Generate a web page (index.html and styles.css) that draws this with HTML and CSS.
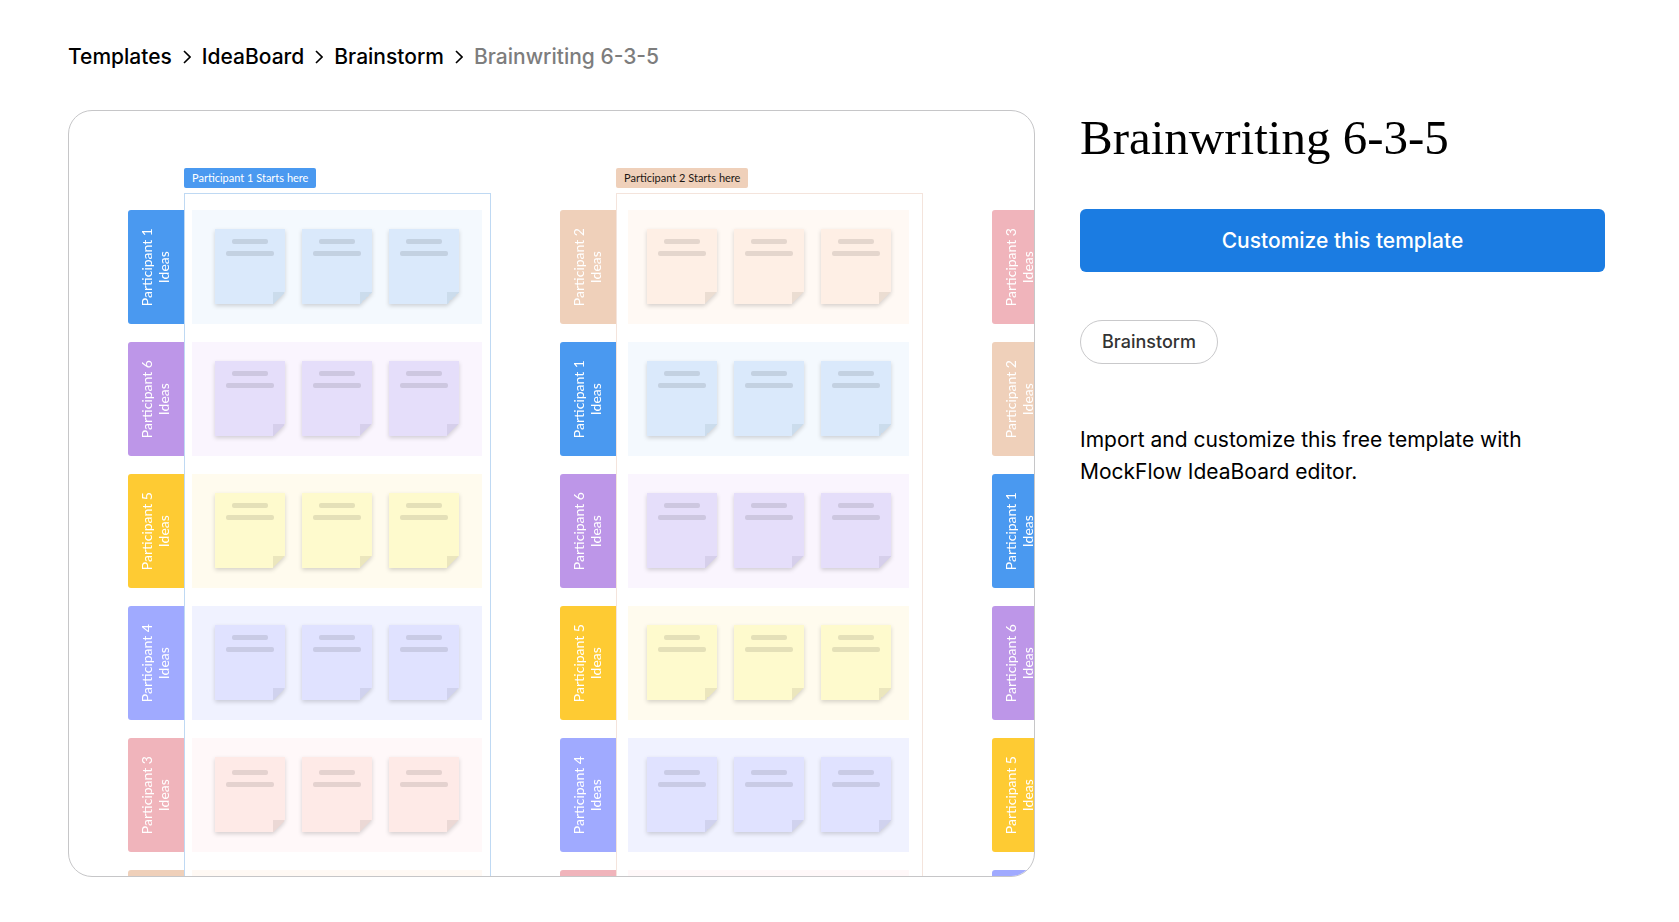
FILE: index.html
```html
<!DOCTYPE html>
<html lang="en">
<head>
  <meta charset="UTF-8">
  <meta name="viewport" content="width=device-width, initial-scale=1.0">
  <title>Brainwriting 6-3-5</title>
  <link rel="stylesheet" href="styles.css">
</head>
<body>

<div class="page">

  <!-- Breadcrumb -->
  <nav class="breadcrumb" aria-label="Breadcrumb">
    <a href="#">Templates</a>
    <svg class="chevron" viewBox="0 0 8 14"><path d="M1 1l6 6-6 6"/></svg>
    <a href="#">IdeaBoard</a>
    <svg class="chevron" viewBox="0 0 8 14"><path d="M1 1l6 6-6 6"/></svg>
    <a href="#">Brainstorm</a>
    <svg class="chevron" viewBox="0 0 8 14"><path d="M1 1l6 6-6 6"/></svg>
    <span class="current">Brainwriting 6-3-5</span>
  </nav>

  <main class="content">

    <!-- Template Preview -->
    <section class="preview">
      <div class="board">

        <div class="lane">
          <div class="tabs">
            <div class="tab blue"><span>Participant 1<br>Ideas</span></div>
            <div class="tab purple"><span>Participant 6<br>Ideas</span></div>
            <div class="tab yellow"><span>Participant 5<br>Ideas</span></div>
            <div class="tab indigo"><span>Participant 4<br>Ideas</span></div>
            <div class="tab pink"><span>Participant 3<br>Ideas</span></div>
            <div class="tab peach"></div>
          </div>
          <div class="panel">
            <div class="start blue">Participant 1 Starts here</div>
            <div class="frame frame-blue">
              <div class="strip blue"><i class="note"></i><i class="note"></i><i class="note"></i></div>
              <div class="strip purple"><i class="note"></i><i class="note"></i><i class="note"></i></div>
              <div class="strip yellow"><i class="note"></i><i class="note"></i><i class="note"></i></div>
              <div class="strip indigo"><i class="note"></i><i class="note"></i><i class="note"></i></div>
              <div class="strip pink"><i class="note"></i><i class="note"></i><i class="note"></i></div>
              <div class="strip peach"></div>
            </div>
          </div>
        </div>

        <div class="lane">
          <div class="tabs">
            <div class="tab peach"><span>Participant 2<br>Ideas</span></div>
            <div class="tab blue"><span>Participant 1<br>Ideas</span></div>
            <div class="tab purple"><span>Participant 6<br>Ideas</span></div>
            <div class="tab yellow"><span>Participant 5<br>Ideas</span></div>
            <div class="tab indigo"><span>Participant 4<br>Ideas</span></div>
            <div class="tab pink"></div>
          </div>
          <div class="panel">
            <div class="start start-dark peach">Participant 2 Starts here</div>
            <div class="frame frame-peach">
              <div class="strip peach"><i class="note"></i><i class="note"></i><i class="note"></i></div>
              <div class="strip blue"><i class="note"></i><i class="note"></i><i class="note"></i></div>
              <div class="strip purple"><i class="note"></i><i class="note"></i><i class="note"></i></div>
              <div class="strip yellow"><i class="note"></i><i class="note"></i><i class="note"></i></div>
              <div class="strip indigo"><i class="note"></i><i class="note"></i><i class="note"></i></div>
              <div class="strip pink"></div>
            </div>
          </div>
        </div>

        <div class="lane">
          <div class="tabs">
            <div class="tab pink"><span>Participant 3<br>Ideas</span></div>
            <div class="tab peach"><span>Participant 2<br>Ideas</span></div>
            <div class="tab blue"><span>Participant 1<br>Ideas</span></div>
            <div class="tab purple"><span>Participant 6<br>Ideas</span></div>
            <div class="tab yellow"><span>Participant 5<br>Ideas</span></div>
            <div class="tab indigo"></div>
          </div>
        </div>

      </div>
    </section>

    <!-- Template Details -->
    <section class="details">
      <h1>Brainwriting 6-3-5</h1>
      <button type="button" class="button">Customize this template</button>
      <a href="#" class="tag">Brainstorm</a>
      <p class="description">Import and customize this free template with MockFlow IdeaBoard editor.</p>
    </section>

  </main>
</div>

</body>
</html>
```

FILE: styles.css
```css
/* Global Styling */
* {
  box-sizing: border-box;
  margin: 0;
  padding: 0;
}
body {
  font-family: Inter, "Liberation Sans", sans-serif;
  background-color: #fff;
  color: #000;
}
a {
  color: inherit;
  text-decoration: none;
}
.page {
  padding: 41px 74px 45px 68px;
}

/* Breadcrumb */
.breadcrumb {
  display: flex;
  align-items: center;
  gap: 11px;
  font-size: 21px;
  font-weight: 500;
  line-height: 32px;
}
.breadcrumb .current {
  color: #7d7d7d;
}
.chevron {
  width: 8px;
  height: 14px;
  fill: none;
  stroke: #000;
  stroke-width: 1.6;
}

/* Page Columns */
.content {
  display: grid;
  grid-template-columns: 967fr 525fr;
  gap: 45px;
  align-items: start;
  margin-top: 37px;
}

/* Template Preview */
.preview {
  aspect-ratio: 967 / 767;
  min-width: 0;
  border: 1px solid #c6c6c8;
  border-radius: 24px;
  overflow: hidden;
}
.board {
  display: flex;
  gap: 69px;
  height: 100%;
  padding: 57px 0 0 59px;
  font-family: Lato, sans-serif;
  overflow: hidden;
}
.lane {
  display: flex;
  flex: none;
  align-items: flex-start;
}
.tabs {
  display: flex;
  flex-direction: column;
  gap: 18px;
  padding-top: 42px;
}
.tab {
  display: flex;
  justify-content: center;
  align-items: center;
  width: 56px;
  height: 114px;
  padding-right: 2px;
  border-radius: 3px 0 0 3px;
  background-color: var(--main);
  color: #fff;
  font-size: 14px;
  line-height: 17px;
  text-align: center;
}
.tab span {
  writing-mode: vertical-rl;
  transform: rotate(180deg);
}
.panel {
  width: 307px;
}
.start {
  width: fit-content;
  height: 20px;
  padding: 0 8px;
  border-radius: 2px;
  background-color: var(--main);
  color: #fff;
  font-size: 11px;
  line-height: 20px;
}
.start-dark {
  color: #1c1714;
}
.frame {
  display: flex;
  flex-direction: column;
  gap: 18px;
  margin-top: 5px;
  border: 1px solid #bfd9f3;
}
.frame-blue {
  padding: 16px 8px 0 7px;
}
.frame-peach {
  padding: 16px 13px 0 11px;
  border-color: #f4e4dc;
}
.strip {
  display: flex;
  justify-content: center;
  gap: 17px;
  height: 114px;
  padding-top: 19px;
  background-color: var(--light);
}

/* Sticky Notes */
.note {
  display: flex;
  flex-direction: column;
  align-items: center;
  gap: 7px;
  width: 70px;
  height: 75px;
  padding-top: 10px;
  filter: drop-shadow(0 2px 2px rgba(0, 0, 0, 0.16));
  background:
    linear-gradient(135deg, var(--fold) 50%, transparent 50%) right bottom / 12px 12px no-repeat,
    linear-gradient(var(--note), var(--note)) left top / 100% 63px no-repeat,
    linear-gradient(var(--note), var(--note)) left bottom / 58px 12px no-repeat;
}
.note::before, .note::after {
  content: "";
  width: 36px;
  height: 5px;
  border-radius: 2px;
  background-color: rgba(0, 0, 0, 0.1);
}
.note::after {
  width: 48px;
}
.strip:nth-child(5) .note {
  padding-top: 13px;
}

/* Participant Colors */
.blue {
  --main: #4a99f0;
  --light: #f4f9fe;
  --note: #dae9fb;
  --fold: #cbdcec;
}
.purple {
  --main: #bd96e8;
  --light: #faf5fe;
  --note: #e5defa;
  --fold: #d6cfeb;
}
.yellow {
  --main: #fecb33;
  --light: #fffbee;
  --note: #fefacd;
  --fold: #ebe6bd;
}
.indigo {
  --main: #a0aaff;
  --light: #f0f2ff;
  --note: #e0e2ff;
  --fold: #d0d2ee;
}
.pink {
  --main: #f0b4bb;
  --light: #fff8f9;
  --note: #feeae7;
  --fold: #ebd8d5;
}
.peach {
  --main: #efd0ba;
  --light: #fff9f4;
  --note: #feefe5;
  --fold: #ebddd2;
}

/* Template Details */
.details {
  display: flex;
  flex-direction: column;
  align-items: flex-start;
}
h1 {
  font-family: "Liberation Serif", serif;
  font-size: 49px;
  font-weight: 400;
  line-height: 56px;
}
.button {
  width: 100%;
  height: 63px;
  margin-top: 43px;
  border: none;
  border-radius: 6px;
  background-color: #1b7ce2;
  color: #fff;
  font-family: inherit;
  font-size: 21px;
  font-weight: 500;
  cursor: pointer;
}
.tag {
  margin-top: 48px;
  padding: 0 21px;
  border: 1px solid #c9c9cb;
  border-radius: 22px;
  color: #333;
  font-size: 18px;
  font-weight: 500;
  line-height: 42px;
}
.description {
  max-width: 480px;
  margin-top: 60px;
  font-size: 21px;
  line-height: 32px;
}
```
